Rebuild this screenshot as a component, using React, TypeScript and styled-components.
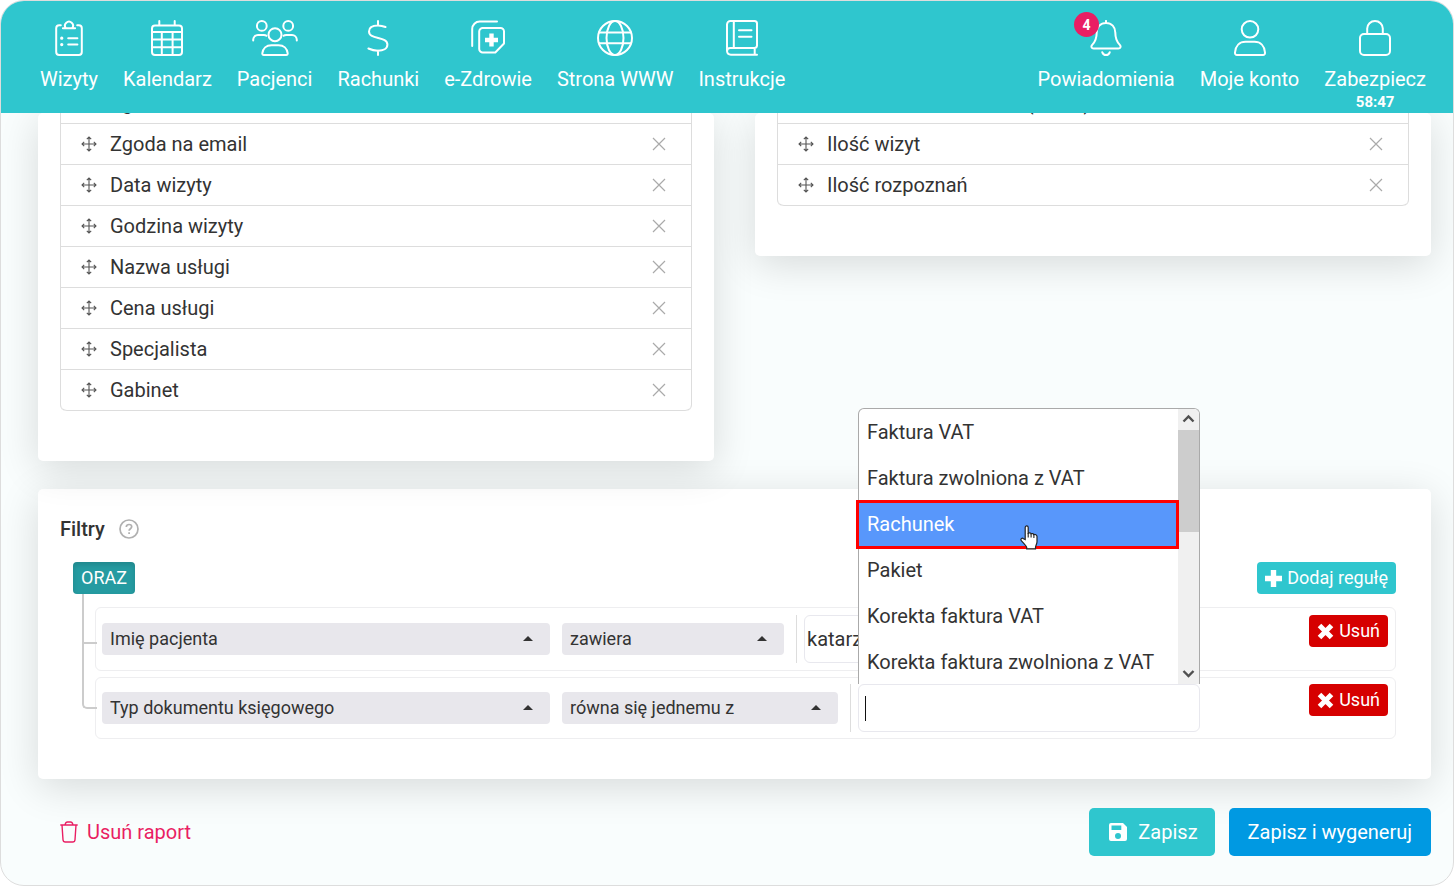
import React from "react";
import styled, { createGlobalStyle } from "styled-components";

const color = {
  teal: "#2fc6ce",
  tealDark: "#259ba1",
  blue: "#0099e2",
  red: "#d60000",
  pink: "#e91e63",
  text: "#333333",
  line: "#dddddd",
  soft: "#eeeef0",
  field: "#e8e7ec",
  page: "#f9fdfd",
};

const GlobalStyle = createGlobalStyle`
  * { box-sizing: border-box; }
  body {
    margin: 0;
    background: #ffffff;
    color: ${color.text};
    font-family: Roboto, "Noto Sans", sans-serif;
    font-size: 20px;
    line-height: 24px;
  }
  button, input, select { font: inherit; color: inherit; }
  button { cursor: pointer; }
`;

const Frame = styled.div`
  display: flex;
  flex-direction: column;
  min-height: 100vh;
  border: 1px solid ${color.line};
  border-radius: 24px;
  background: ${color.page};
  overflow: hidden;
`;

const Header = styled.header`
  position: relative;
  z-index: 2;
  display: flex;
  justify-content: space-between;
  height: 112px;
  padding: 19px 27px 0 39px;
  background: ${color.teal};
`;

const NavGroup = styled.nav`
  display: flex;
  gap: 25px;
`;

const NavLink = styled.a`
  position: relative;
  display: flex;
  flex-direction: column;
  align-items: center;
  color: #ffffff;
  text-decoration: none;
  white-space: nowrap;
`;

const NavIcon = styled.svg`
  height: 36px;
  margin-bottom: 11px;
  fill: none;
  stroke: currentColor;
  stroke-width: 2;
  stroke-linecap: round;
  stroke-linejoin: round;
`;

const Timer = styled.span`
  font-size: 15px;
  font-weight: 700;
  line-height: 22px;
`;

const IconWrap = styled.span`
  position: relative;
  display: flex;
`;

const Badge = styled.span`
  position: absolute;
  top: -8px;
  left: -14px;
  width: 25px;
  height: 25px;
  border-radius: 50%;
  background: ${color.pink};
  font-size: 14px;
  font-weight: 700;
  line-height: 26px;
  text-align: center;
`;

const Main = styled.main`
  flex: 1;
  padding: 0 22px 29px 37px;
`;

const Columns = styled.div`
  display: grid;
  grid-template-columns: 1fr 1fr;
  align-items: start;
  gap: 41px;
`;

const Card = styled.section`
  border-radius: 5px;
  background: #ffffff;
  box-shadow: 0 8px 40px rgba(0, 0, 0, 0.14);
`;

const ListCard = styled(Card)`
  padding: 0 22px 50px;
`;

const FieldList = styled.ul`
  margin: -30px 0 0;
  padding: 0;
  list-style: none;
  border: 1px solid ${color.line};
  border-width: 0 1px;
  border-radius: 6px;
`;

const FieldRow = styled.li`
  display: flex;
  align-items: center;
  height: 41px;
  padding: 0 25px 0 20px;
  border-bottom: 1px solid ${color.line};

  &:last-child {
    border-radius: 0 0 6px 6px;
  }
`;

const FieldName = styled.span`
  flex: 1;
  margin-left: 13px;
`;

const IconButton = styled.button`
  display: flex;
  padding: 0;
  border: 0;
  background: none;
`;

const FilterCard = styled(Card)`
  margin-top: 28px;
  padding: 28px 35px 40px;
`;

const FilterTitle = styled.div`
  display: flex;
  align-items: center;
  gap: 14px;
  margin-left: -13px;

  h2 {
    margin: 0;
    font-size: 20px;
    font-weight: 500;
  }
`;

const FilterBar = styled.div`
  display: flex;
  justify-content: space-between;
  margin: 21px 0 13px;
`;

const SmallButton = styled.button<{ $bg: string; $pressed?: boolean }>`
  display: flex;
  align-items: center;
  gap: 5px;
  height: 32px;
  padding: 0 8px;
  border: 0;
  border-radius: 4px;
  background: ${(p) => p.$bg};
  box-shadow: ${(p) => (p.$pressed ? "inset 0 3px 5px rgba(0, 0, 0, 0.13)" : "none")};
  color: #ffffff;
  font-size: 18px;
  line-height: 24px;
  white-space: nowrap;
`;

const Rules = styled.ul`
  display: flex;
  flex-direction: column;
  gap: 6px;
  margin: 0;
  padding: 0 0 0 22px;
  list-style: none;
`;

const Rule = styled.li<{ $compact?: boolean }>`
  position: relative;
  display: flex;
  align-items: center;
  padding: ${(p) => (p.$compact ? "6px" : "7px")} 7px ${(p) => (p.$compact ? "6px" : "7px")} 6px;
  border: 1px solid ${color.soft};
  border-radius: 6px;

  &::before {
    content: "";
    position: absolute;
    left: -14px;
    top: -14px;
    width: 13px;
    height: 48px;
    border: solid #cccccc;
    border-width: 0 0 2px 2px;
  }

  &:last-child::before {
    top: -37px;
    height: 66px;
    border-bottom-left-radius: 5px;
  }
`;

const SelectBox = styled.span<{ $width: number }>`
  position: relative;
  flex: 0 1 ${(p) => p.$width}px;
  min-width: 0;
  margin-right: 12px;

  &::after {
    content: "";
    position: absolute;
    top: 13px;
    right: 17px;
    border: 5px solid transparent;
    border-top: 0;
    border-bottom-color: ${color.text};
    pointer-events: none;
  }
`;

const Select = styled.select`
  display: block;
  width: 100%;
  height: 32px;
  padding: 0 36px 0 8px;
  border: 0;
  border-radius: 4px;
  background: ${color.field};
  font-size: 18px;
  appearance: none;
`;

const ValueArea = styled.div`
  position: relative;
  display: flex;
  height: 48px;
  padding-left: 7px;
  border-left: 1px solid ${color.line};
`;

const Field = styled.div`
  display: flex;
  align-items: center;
  width: 342px;
  padding: 0 2px;
  border: 1px solid #e8e8ee;
  border-radius: 6px;
  background: #ffffff;
`;

const TextInput = styled.input`
  width: 100%;
  height: 40px;
  padding: 0;
  border: 0;
  outline: 0;
  background: transparent;
`;

const Caret = styled.span`
  flex: none;
  width: 1px;
  height: 25px;
  margin-left: 4px;
  background: #111111;
`;

const RemoveSlot = styled.div`
  align-self: flex-start;
  margin-left: auto;
`;

const Dropdown = styled.div`
  position: absolute;
  z-index: 3;
  left: 7px;
  bottom: 48px;
  display: flex;
  width: 342px;
  height: 276px;
  border: 1px solid #aaaaaa;
  border-bottom: 0;
  border-radius: 6px 6px 0 0;
  background: #ffffff;
`;

const Options = styled.ul`
  flex: 1;
  margin: 0;
  padding: 0;
  list-style: none;
`;

const Option = styled.li<{ $active: boolean }>`
  position: relative;
  height: 46px;
  padding: 0 8px;
  background: ${(p) => (p.$active ? "#5897fb" : "transparent")};
  color: ${(p) => (p.$active ? "#ffffff" : "inherit")};
  line-height: 46px;
  white-space: nowrap;

  &::after {
    content: "";
    display: ${(p) => (p.$active ? "block" : "none")};
    position: absolute;
    inset: -1px -1px -2px -3px;
    border: 3px solid #ff0000;
  }
`;

const Pointer = styled.svg`
  position: absolute;
  z-index: 1;
  left: 161px;
  top: 24px;
`;

const ScrollTrack = styled.div`
  display: flex;
  flex-direction: column;
  width: 21px;
  border-top-right-radius: 5px;
  background: #f0f0f0;
`;

const ScrollArrow = styled.svg`
  flex: none;
  fill: none;
  stroke: #505050;
  stroke-width: 2.4;
`;

const ScrollThumb = styled.div`
  height: 102px;
  margin-bottom: auto;
  background: #cdcdcd;
`;

const Footer = styled.div`
  display: flex;
  align-items: center;
  gap: 14px;
  margin-top: 29px;
`;

const DeleteReport = styled.button`
  display: flex;
  align-items: center;
  gap: 9px;
  margin-right: auto;
  padding: 0 0 0 22px;
  border: 0;
  background: none;
  color: ${color.pink};
`;

const ActionButton = styled.button<{ $bg: string; $pad: number }>`
  display: flex;
  align-items: center;
  gap: 8px;
  height: 48px;
  padding: 0 ${(p) => p.$pad}px;
  border: 0;
  border-radius: 5px;
  background: ${(p) => p.$bg};
  color: #ffffff;
  white-space: nowrap;
`;

const icons = {
  visits: (
    <NavIcon width="36" viewBox="0 0 36 36">
      <path d="M9.800 5.300H8.200a3 3 0 0 0-3 3V32a3 3 0 0 0 3 3h19.600a3 3 0 0 0 3-3V8.300a3 3 0 0 0-3-3h-1.600" />
      <path d="M11.900 8.300h12.200M14.800 8.100a4 4 0 1 1 6.400 0" />
      <path d="M17.200 18.200h9.200M17.200 24.600h9.200" />
      <path d="M10.700 18.200h.1M10.700 24.600h.1" strokeWidth="3.200" />
    </NavIcon>
  ),
  calendar: (
    <NavIcon width="36" viewBox="0 0 36 36">
      <rect x="3" y="5.500" width="30" height="29.500" rx="3" />
      <path d="M10.300 1v4M25.700 1v4M3 12h30M3 19.500h30M3 27.300h30M12.800 12v23M23.600 12v23" />
    </NavIcon>
  ),
  patients: (
    <NavIcon width="46" viewBox="0 0 46 36">
      <circle cx="9.800" cy="5.900" r="4.900" />
      <circle cx="36.200" cy="5.900" r="4.900" />
      <circle cx="23" cy="14.700" r="6.500" />
      <path d="M1.200 20.600v-.8a4.800 4.800 0 0 1 4.800-4.800h5.800q1.700 0 2.600.8M44.800 20.600v-.8a4.800 4.800 0 0 0-4.800-4.800h-5.800q-1.700 0-2.600.8" />
      <path d="M10.300 33.400c.5-5 4-8.200 9.200-8.200h7c5.200 0 8.700 3.200 9.200 8.200q.1 1.600-1.500 1.600H11.800q-1.600 0-1.500-1.600z" />
    </NavIcon>
  ),
  bills: (
    <NavIcon width="36" viewBox="0 0 36 36">
      <path d="M18 1v4.500M18 30.500V35M25.500 7C22.700 5.800 20.400 5.400 18 5.400c-5 0-9 1.800-9 6C9 20 27.400 16 27.400 24.500c0 4.200-4.200 6.200-9.400 6.200-3.400 0-6.600-.8-9.600-2.200" />
    </NavIcon>
  ),
  health: (
    <NavIcon width="36" viewBox="0 0 36 36">
      <path d="M2.200 26V9a7.500 7.500 0 0 1 7.500-7.500H27" />
      <path d="M13 8h17.500a3.500 3.500 0 0 1 3.500 3.500v12L25.300 32.500H13A3.500 3.500 0 0 1 9.200 29V11.500A3.500 3.500 0 0 1 13 8z" />
      <path d="M21.500 13.500v13M15 20h13" strokeWidth="4.400" strokeLinecap="butt" />
    </NavIcon>
  ),
  globe: (
    <NavIcon width="36" viewBox="0 0 36 36">
      <circle cx="18" cy="18" r="17" />
      <ellipse cx="18" cy="18" rx="8.500" ry="17" />
      <path d="M2 12.500h32M2 23.200h32" />
    </NavIcon>
  ),
  book: (
    <NavIcon width="36" viewBox="0 0 36 36">
      <path d="M33 34.700H7a4 4 0 0 1-4-3.700V4.500A3.500 3.500 0 0 1 6.500 1.100H30.500a2.500 2.500 0 0 1 2.500 2.500V25.500a2.500 2.500 0 0 1-2.500 2.400H6.500a3.400 3.400 0 0 0-3.500 3.200M9.800 1.100v26.800M15 10.200h12.500M15 16.800h12.500M30.700 28v6.500" />
    </NavIcon>
  ),
  bell: (
    <NavIcon width="36" viewBox="0 0 36 36">
      <path d="M18 .9v2M18 2.900c-5.600 0-9.300 4.200-9.300 9.600 0 6.400-1.600 9.300-4.300 12.100-1.800 1.900-.9 3.900 1.200 3.900h24.800c2.100 0 3-2 1.200-3.900-2.700-2.800-4.300-5.700-4.300-12.100 0-5.400-3.700-9.600-9.300-9.600zM14.300 32.300c.6 1.700 2 2.700 3.700 2.700s3.100-1 3.700-2.700" />
    </NavIcon>
  ),
  user: (
    <NavIcon width="36" viewBox="0 0 36 36">
      <circle cx="18" cy="9.300" r="8.300" />
      <path d="M3 32.500C3.500 26 7.500 21.800 13.500 21.800h9C28.500 21.800 32.500 26 33 32.500c.1 1.600-.7 2.400-2 2.400H5c-1.300 0-2.100-.8-2-2.400z" />
    </NavIcon>
  ),
  lock: (
    <NavIcon width="36" viewBox="0 0 36 36">
      <rect x="3" y="14" width="30" height="21" rx="4" />
      <path d="M10.200 14V8.500a7.800 7.500 0 0 1 15.600 0V14" />
    </NavIcon>
  ),
};

const MoveIcon = () => (
  <svg width="16" height="16" viewBox="0 0 16 16" fill="none" stroke="#555555" strokeWidth="1.100">
    <path d="M8 1v14M1 8h14M5.800 3.200L8 1l2.200 2.200M5.800 12.800L8 15l2.200-2.200M3.200 5.800L1 8l2.200 2.200M12.800 5.800L15 8l-2.200 2.200" />
  </svg>
);

const CloseIcon = () => (
  <svg width="14" height="14" viewBox="0 0 14 14" fill="none" stroke="#aaaaaa" strokeWidth="1.200">
    <path d="M1 1l12 12M13 1L1 13" />
  </svg>
);

const mainNav: [string, React.ReactNode][] = [
  ["Wizyty", icons.visits],
  ["Kalendarz", icons.calendar],
  ["Pacjenci", icons.patients],
  ["Rachunki", icons.bills],
  ["e-Zdrowie", icons.health],
  ["Strona WWW", icons.globe],
  ["Instrukcje", icons.book],
];

const leftFields = [
  "Zgoda na SMS",
  "Zgoda na email",
  "Data wizyty",
  "Godzina wizyty",
  "Nazwa usługi",
  "Cena usługi",
  "Specjalista",
  "Gabinet",
];

const rightFields = ["Wartość dokumentów (suma)", "Ilość wizyt", "Ilość rozpoznań"];

const documentTypes = [
  "Faktura VAT",
  "Faktura zwolniona z VAT",
  "Rachunek",
  "Pakiet",
  "Korekta faktura VAT",
  "Korekta faktura zwolniona z VAT",
];

const Fields = ({ names }: { names: string[] }) => (
  <ListCard>
    <FieldList>
      {names.map((name) => (
        <FieldRow key={name}>
          <IconButton aria-label={`Przesuń: ${name}`}>
            <MoveIcon />
          </IconButton>
          <FieldName>{name}</FieldName>
          <IconButton aria-label={`Usuń: ${name}`}>
            <CloseIcon />
          </IconButton>
        </FieldRow>
      ))}
    </FieldList>
  </ListCard>
);

const RuleSelect = ({ label, value, width }: { label: string; value: string; width: number }) => (
  <SelectBox $width={width}>
    <Select aria-label={label} defaultValue={value}>
      <option>{value}</option>
    </Select>
  </SelectBox>
);

const RemoveRule = () => (
  <RemoveSlot>
    <SmallButton $bg={color.red}>
      <svg width="17" height="17" viewBox="0 0 17 17" stroke="#ffffff" strokeWidth="5">
        <path d="M2.500 2.500l12 12M14.500 2.500l-12 12" />
      </svg>
      Usuń
    </SmallButton>
  </RemoveSlot>
);

export default function App() {
  return (
    <>
      <GlobalStyle />
      <Frame>
        <Header>
          <NavGroup aria-label="Menu główne">
            {mainNav.map(([label, icon]) => (
              <NavLink href="#" key={label}>
                {icon}
                {label}
              </NavLink>
            ))}
          </NavGroup>
          <NavGroup aria-label="Konto">
            <NavLink href="#">
              <IconWrap>
                {icons.bell}
                <Badge>4</Badge>
              </IconWrap>
              Powiadomienia
            </NavLink>
            <NavLink href="#">
              {icons.user}
              Moje konto
            </NavLink>
            <NavLink href="#">
              {icons.lock}
              Zabezpiecz
              <Timer>58:47</Timer>
            </NavLink>
          </NavGroup>
        </Header>

        <Main>
          <Columns>
            <Fields names={leftFields} />
            <Fields names={rightFields} />
          </Columns>

          <FilterCard>
            <FilterTitle>
              <h2>Filtry</h2>
              <IconButton aria-label="Pomoc">
                <svg width="20" height="20" viewBox="0 0 20 20" fill="none" stroke="#b0b0b0" strokeWidth="1.700">
                  <circle cx="10" cy="10" r="9" />
                  <path d="M7.300 8c0-1.700 1.200-2.500 2.700-2.500s2.700.9 2.700 2.300c0 1.900-2.600 2-2.600 4M10.100 13.300v1.700" />
                </svg>
              </IconButton>
            </FilterTitle>

            <FilterBar>
              <SmallButton $bg={color.tealDark} $pressed>
                ORAZ
              </SmallButton>
              <SmallButton $bg={color.teal}>
                <svg width="17" height="17" viewBox="0 0 17 17" stroke="#ffffff" strokeWidth="5.400">
                  <path d="M8.500 0v17M0 8.500h17" />
                </svg>
                Dodaj regułę
              </SmallButton>
            </FilterBar>

            <Rules>
              <Rule>
                <RuleSelect label="Pole" value="Imię pacjenta" width={448} />
                <RuleSelect label="Warunek" value="zawiera" width={222} />
                <ValueArea>
                  <Field>
                    <TextInput aria-label="Wartość" defaultValue="katarzyna" />
                  </Field>
                </ValueArea>
                <RemoveRule />
              </Rule>
              <Rule $compact>
                <RuleSelect label="Pole" value="Typ dokumentu księgowego" width={448} />
                <RuleSelect label="Warunek" value="równa się jednemu z" width={276} />
                <ValueArea>
                  <Field>
                    <Caret />
                    <TextInput aria-label="Typ dokumentu" />
                  </Field>
                  <Dropdown>
                    <Options role="listbox" aria-label="Typ dokumentu">
                      {documentTypes.map((name) => (
                        <Option
                          key={name}
                          role="option"
                          aria-selected={name === "Rachunek"}
                          $active={name === "Rachunek"}
                        >
                          {name}
                          {name === "Rachunek" && (
                            <Pointer width="18" height="25" viewBox="0 0 18 25">
                              <path
                                d="M5.200 14.500V2.600C5.200.4 8.200.4 8.200 2.600v5.600c1-.7 2.500-.4 2.900.6 1-.6 2.300-.2 2.700.9 1.300-.6 3.200.1 3.200 1.900v5.200c0 2.300-1.500 3.500-1.500 5.700v1.300H6.700v-1.300c0-1.200-2.200-3.200-5.200-6.600-1.600-1.900.6-3.400 2-2.200z"
                                fill="#ffffff"
                                stroke="#222222"
                                strokeWidth="1.200"
                              />
                              <path d="M8.200 8v4.500M11.100 9v3.500M13.900 10v3" stroke="#222222" strokeWidth="1.100" />
                            </Pointer>
                          )}
                        </Option>
                      ))}
                    </Options>
                    <ScrollTrack>
                      <ScrollArrow width="21" height="21" viewBox="0 0 21 21">
                        <path d="M5.500 12.500l5-5 5 5" />
                      </ScrollArrow>
                      <ScrollThumb />
                      <ScrollArrow width="21" height="21" viewBox="0 0 21 21">
                        <path d="M5.500 8l5 5 5-5" />
                      </ScrollArrow>
                    </ScrollTrack>
                  </Dropdown>
                </ValueArea>
                <RemoveRule />
              </Rule>
            </Rules>
          </FilterCard>

          <Footer>
            <DeleteReport>
              <svg
                width="18"
                height="22"
                viewBox="0 0 18 22"
                fill="none"
                stroke="currentColor"
                strokeWidth="1.400"
                strokeLinecap="round"
                strokeLinejoin="round"
              >
                <path d="M.8 4h16.400M5 3.800c.4-1.700 1.200-2.800 2.500-2.800h3c1.300 0 2.100 1.100 2.500 2.800M2 4l1 14.800q.2 2.200 2.300 2.200h7.400q2.100 0 2.300-2.200L16 4" />
              </svg>
              Usuń raport
            </DeleteReport>
            <ActionButton $bg={color.teal} $pad={17}>
              <svg width="24" height="24" viewBox="0 0 24 24" fill="#ffffff">
                <path
                  fillRule="evenodd"
                  d="M5 3h12l4 4v12a2 2 0 0 1-2 2H5a2 2 0 0 1-2-2V5a2 2 0 0 1 2-2zM5.500 5.500v4.500h9.800V5.500zM12 13a3 3 0 1 0 0 6 3 3 0 0 0 0-6z"
                />
              </svg>
              Zapisz
            </ActionButton>
            <ActionButton $bg={color.blue} $pad={19}>
              Zapisz i wygeneruj
            </ActionButton>
          </Footer>
        </Main>
      </Frame>
    </>
  );
}
